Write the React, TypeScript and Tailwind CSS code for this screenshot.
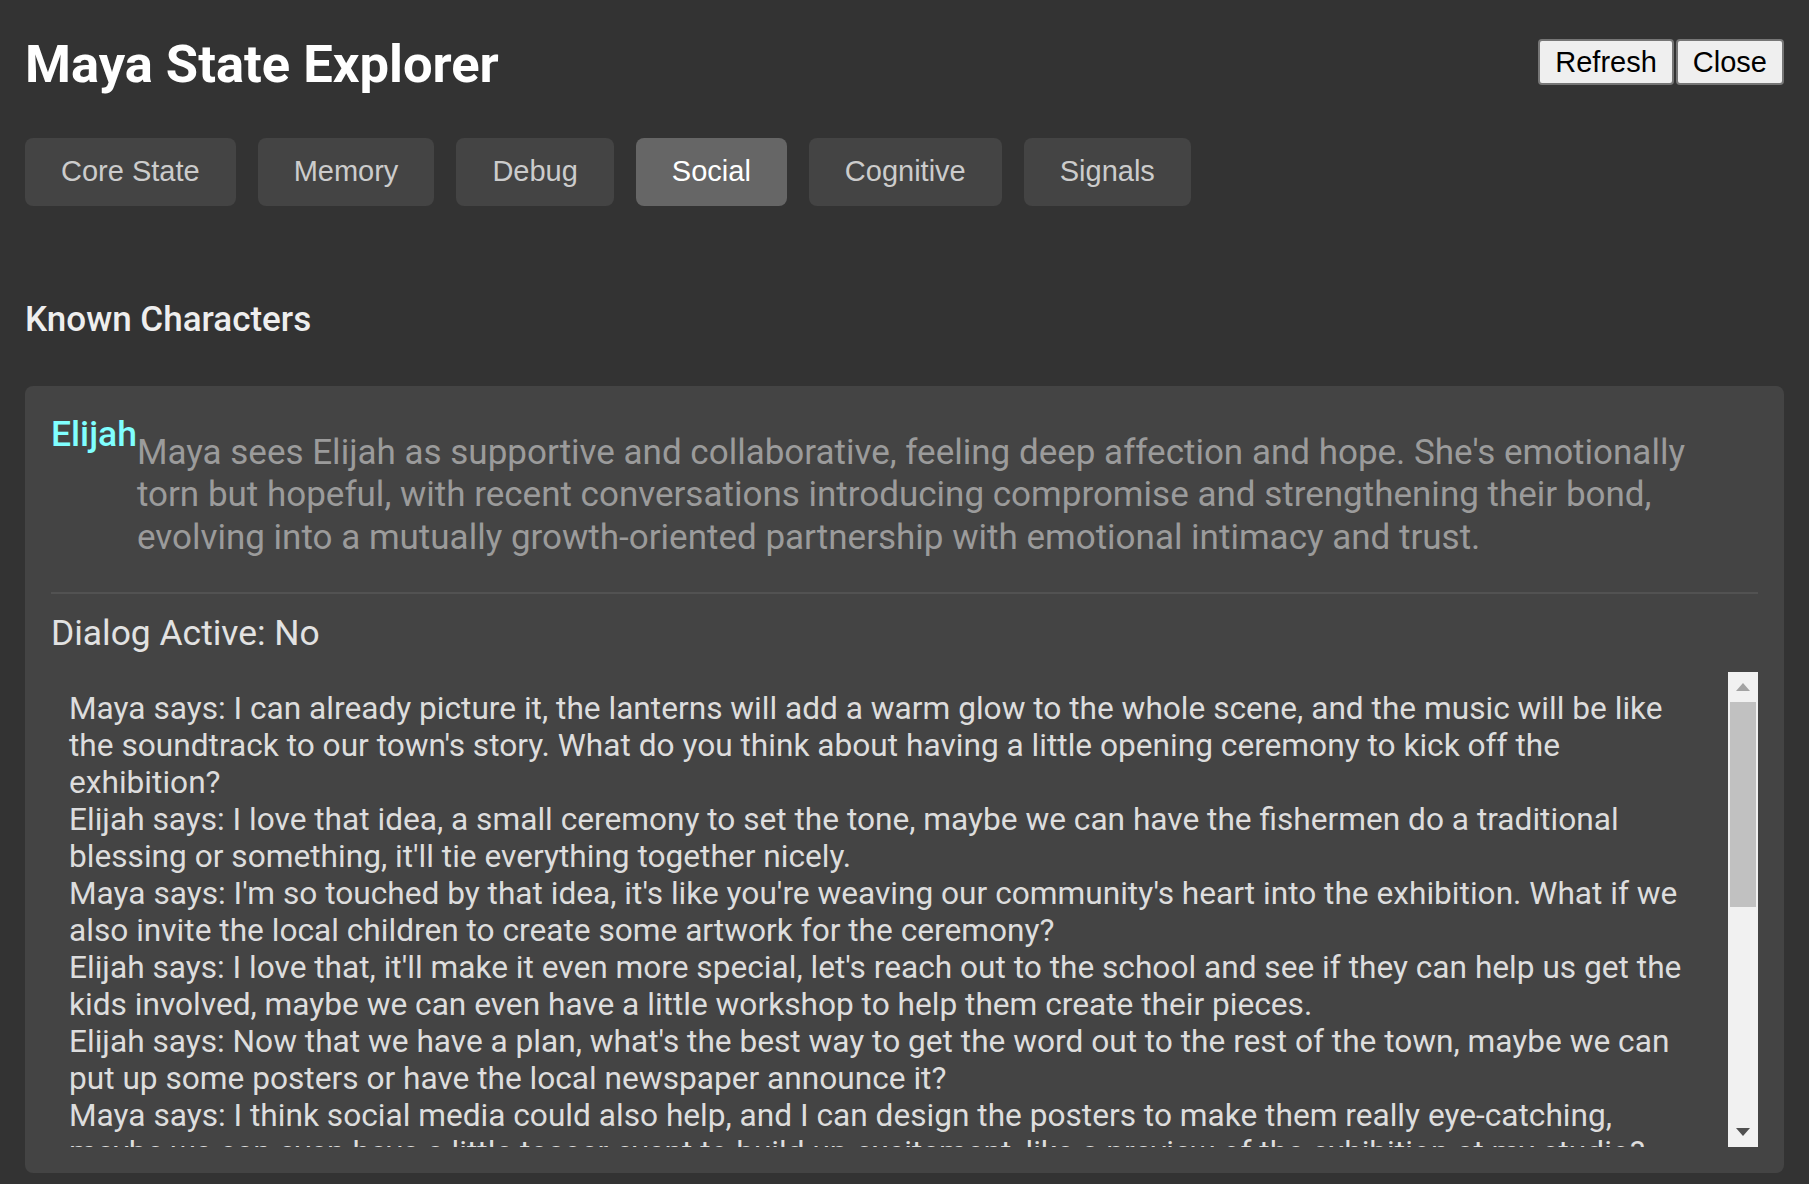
import React from "react";

const tabs = ["Core State", "Memory", "Debug", "Social", "Cognitive", "Signals"];

const descLines = [
  "Maya sees Elijah as supportive and collaborative, feeling deep affection and hope. She's emotionally",
  "torn but hopeful, with recent conversations introducing compromise and strengthening their bond,",
  "evolving into a mutually growth-oriented partnership with emotional intimacy and trust.",
];

const dialog: string[][] = [
  [
    "Maya says: I can already picture it, the lanterns will add a warm glow to the whole scene, and the music will be like",
    "the soundtrack to our town's story. What do you think about having a little opening ceremony to kick off the",
    "exhibition?",
  ],
  [
    "Elijah says: I love that idea, a small ceremony to set the tone, maybe we can have the fishermen do a traditional",
    "blessing or something, it'll tie everything together nicely.",
  ],
  [
    "Maya says: I'm so touched by that idea, it's like you're weaving our community's heart into the exhibition. What if we",
    "also invite the local children to create some artwork for the ceremony?",
  ],
  [
    "Elijah says: I love that, it'll make it even more special, let's reach out to the school and see if they can help us get the",
    "kids involved, maybe we can even have a little workshop to help them create their pieces.",
  ],
  [
    "Elijah says: Now that we have a plan, what's the best way to get the word out to the rest of the town, maybe we can",
    "put up some posters or have the local newspaper announce it?",
  ],
  [
    "Maya says: I think social media could also help, and I can design the posters to make them really eye-catching,",
    "maybe we can even have a little teaser event to build up excitement, like a preview of the exhibition at my studio?",
  ],
];

export default function App() {
  return (
    <div className="min-h-screen bg-[#333333] px-[25px] pb-[12px] font-['Roboto',sans-serif]">
      <header className="flex items-start justify-between pt-[34px]">
        <h1 className="text-[52.5px] leading-[61px] font-bold text-white">Maya State Explorer</h1>
        <div className="mt-[5px] flex gap-[2px]">
          <button className="h-[46px] rounded-[4px] border-2 border-[#767676] bg-[#efefef] px-[15px] font-['Liberation_Sans',Arial,sans-serif] text-[29px] leading-[33px] text-black">
            Refresh
          </button>
          <button className="h-[46px] rounded-[4px] border-2 border-[#767676] bg-[#efefef] px-[15px] font-['Liberation_Sans',Arial,sans-serif] text-[29px] leading-[33px] text-black">
            Close
          </button>
        </div>
      </header>

      <nav className="mt-[43px] flex gap-[22px]">
        {tabs.map((t) => (
          <div
            key={t}
            className={
              t === "Social"
                ? "flex h-[68px] items-center rounded-[8px] bg-[#666666] px-[36px] font-['Liberation_Sans',Arial,sans-serif] text-[29px] text-white"
                : "flex h-[68px] items-center rounded-[8px] bg-[#444444] px-[36px] font-['Liberation_Sans',Arial,sans-serif] text-[29px] text-[#cccccc]"
            }
          >
            {t}
          </div>
        ))}
      </nav>

      <h3 className="mt-[93px] text-[35px] leading-[41px] font-medium text-[#eeeeee]">Known Characters</h3>

      <section className="mt-[46px] rounded-[8px] bg-[#444444] px-[26px] pt-[26px] pb-[26px]">
        <div className="flex items-start border-b-2 border-[#525252] pb-[33px]">
          <span className="mt-[2px] text-[35.5px] leading-[41px] font-medium text-[#80ffff]">Elijah</span>
          <div className="mt-[19.5px] text-[35px] leading-[42.5px] text-[#9b9b9b]">
            {descLines.map((l, i) => (
              <div key={i} className="whitespace-nowrap">
                {l}
              </div>
            ))}
          </div>
        </div>

        <div className="mt-[19px] text-[35.4px] leading-[41px] text-[#e2e2e2]">Dialog Active: No</div>

        <div className="mt-[17.5px] flex h-[475px]">
          <div className="flex-1 overflow-hidden pt-[18px] pl-[18px] text-[31.65px] leading-[37px] text-[#dddddd]">
            {dialog.map((msg, i) => (
              <div key={i}>
                {msg.map((l, j) => (
                  <div key={j} className="whitespace-nowrap">
                    {l}
                  </div>
                ))}
              </div>
            ))}
          </div>
          <div className="flex w-[30px] flex-col bg-[#f1f1f1]">
            <div className="flex h-[30px] items-center justify-center">
              <svg width="14" height="8" viewBox="0 0 14 8">
                <polygon points="7,0 14,8 0,8" fill="#a3a3a3" />
              </svg>
            </div>
            <div className="mx-[2px] h-[205px] bg-[#c1c1c1]" />
            <div className="flex-1" />
            <div className="flex h-[30px] items-center justify-center">
              <svg width="14" height="8" viewBox="0 0 14 8">
                <polygon points="0,0 14,0 7,8" fill="#505050" />
              </svg>
            </div>
          </div>
        </div>
      </section>
    </div>
  );
}
